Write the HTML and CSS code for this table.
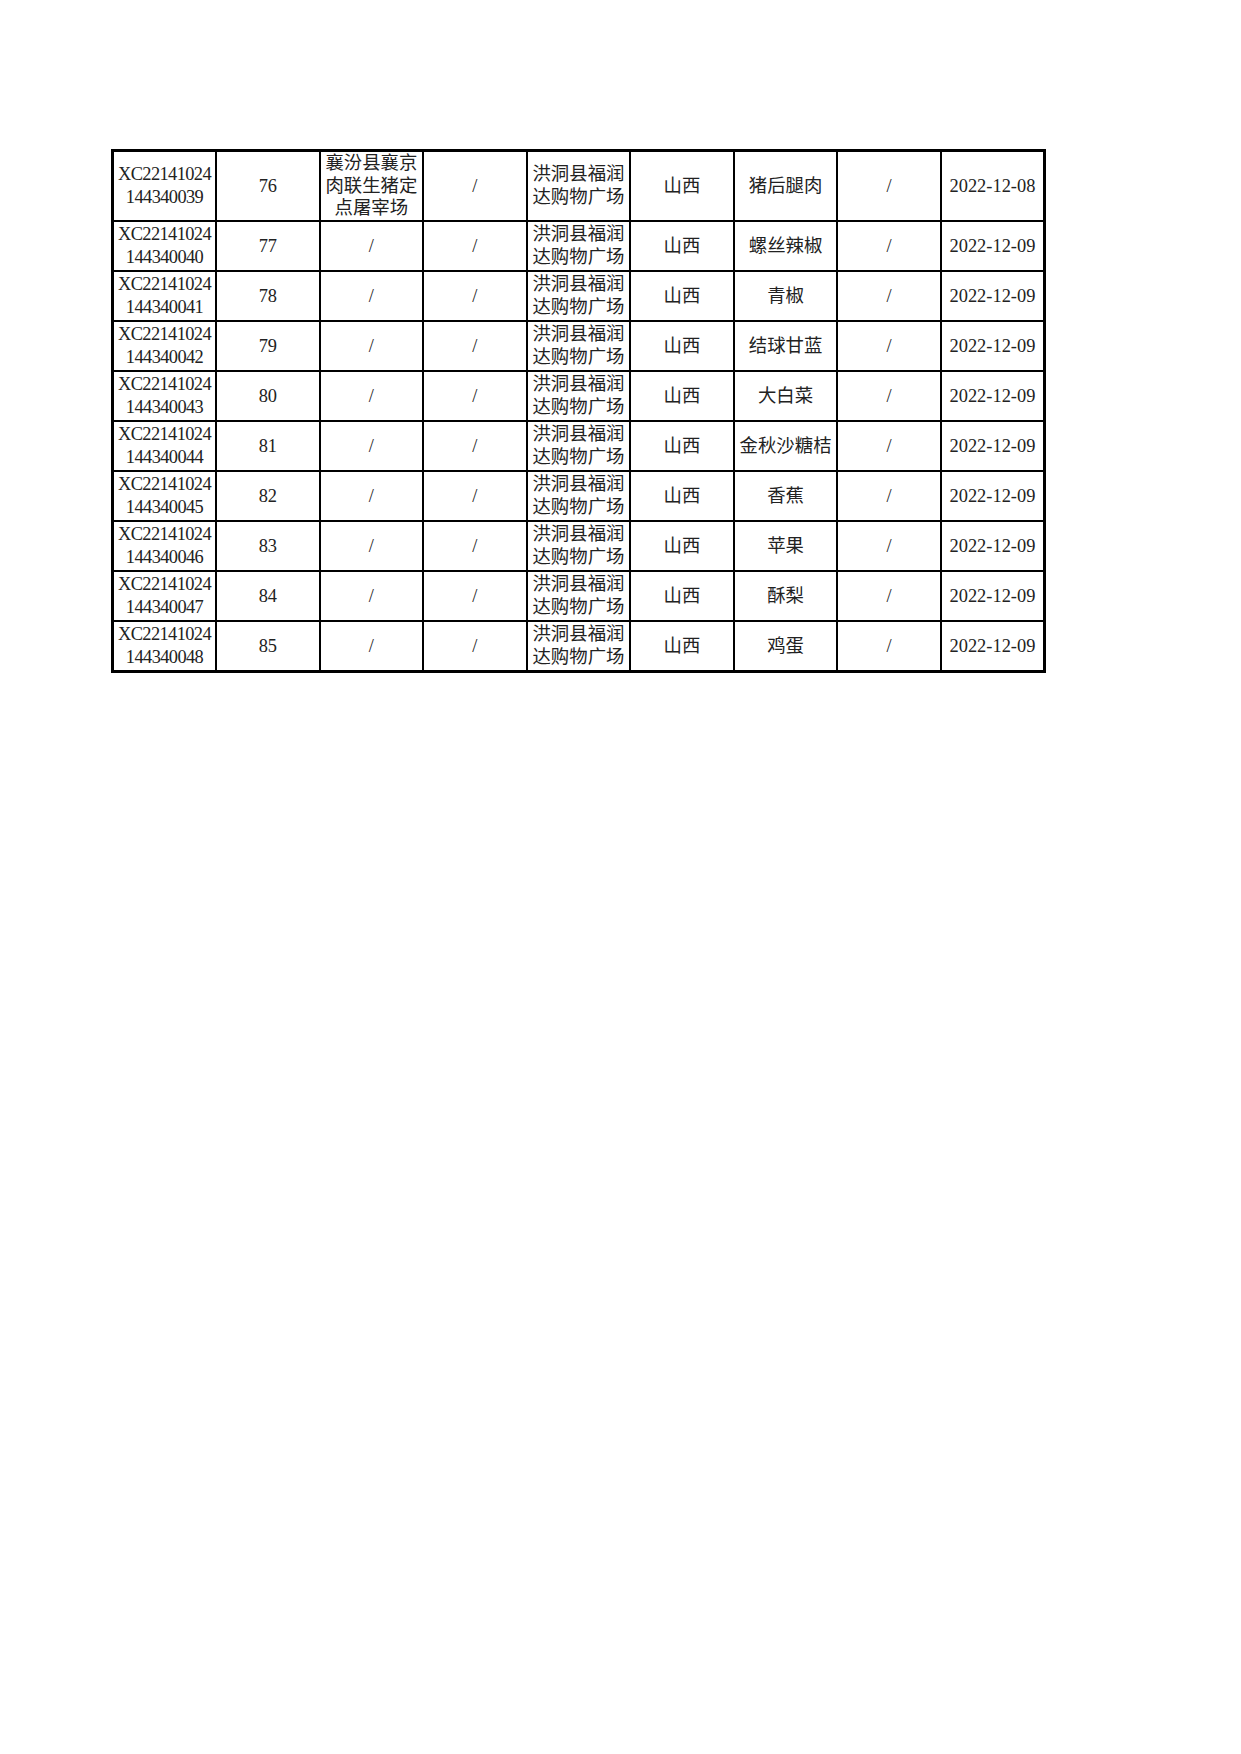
FILE: index.html
```html
<!DOCTYPE html>
<html lang="zh-CN">
<head>
<meta charset="utf-8">
<title>抽检信息</title>
<link rel="stylesheet" href="styles.css">
</head>
<body>
<div class="page">
<table class="sheet">
<tbody>
<tr class="tall"><td class="id">XC22141024<br>144340039</td><td>76</td><td>襄汾县襄京肉联生猪定点屠宰场</td><td>/</td><td>洪洞县福润达购物广场</td><td>山西</td><td>猪后腿肉</td><td>/</td><td>2022-12-08</td></tr>
<tr><td class="id">XC22141024<br>144340040</td><td>77</td><td>/</td><td>/</td><td>洪洞县福润达购物广场</td><td>山西</td><td>螺丝辣椒</td><td>/</td><td>2022-12-09</td></tr>
<tr><td class="id">XC22141024<br>144340041</td><td>78</td><td>/</td><td>/</td><td>洪洞县福润达购物广场</td><td>山西</td><td>青椒</td><td>/</td><td>2022-12-09</td></tr>
<tr><td class="id">XC22141024<br>144340042</td><td>79</td><td>/</td><td>/</td><td>洪洞县福润达购物广场</td><td>山西</td><td>结球甘蓝</td><td>/</td><td>2022-12-09</td></tr>
<tr><td class="id">XC22141024<br>144340043</td><td>80</td><td>/</td><td>/</td><td>洪洞县福润达购物广场</td><td>山西</td><td>大白菜</td><td>/</td><td>2022-12-09</td></tr>
<tr><td class="id">XC22141024<br>144340044</td><td>81</td><td>/</td><td>/</td><td>洪洞县福润达购物广场</td><td>山西</td><td>金秋沙糖桔</td><td>/</td><td>2022-12-09</td></tr>
<tr><td class="id">XC22141024<br>144340045</td><td>82</td><td>/</td><td>/</td><td>洪洞县福润达购物广场</td><td>山西</td><td>香蕉</td><td>/</td><td>2022-12-09</td></tr>
<tr><td class="id">XC22141024<br>144340046</td><td>83</td><td>/</td><td>/</td><td>洪洞县福润达购物广场</td><td>山西</td><td>苹果</td><td>/</td><td>2022-12-09</td></tr>
<tr><td class="id">XC22141024<br>144340047</td><td>84</td><td>/</td><td>/</td><td>洪洞县福润达购物广场</td><td>山西</td><td>酥梨</td><td>/</td><td>2022-12-09</td></tr>
<tr><td class="id">XC22141024<br>144340048</td><td>85</td><td>/</td><td>/</td><td>洪洞县福润达购物广场</td><td>山西</td><td>鸡蛋</td><td>/</td><td>2022-12-09</td></tr>
</tbody>
</table>
</div>
</body>
</html>
```
FILE: styles.css
```css
html, body {
  margin: 0;
  padding: 0;
  background: #ffffff;
}
.page {
  padding: 149px 0 0 111px;
}
.sheet {
  border-collapse: collapse;
  table-layout: fixed;
  width: 935px;
  border: 3px solid #000;
  font-family: "Liberation Serif", "Noto Sans CJK SC", serif;
  font-size: 18.4px;
  line-height: 23px;
  color: #222;
}
.sheet td {
  border: 2px solid #000;
  padding: 0 2px;
  text-align: center;
  vertical-align: middle;
  word-break: break-all;
  height: 48px;
}
.sheet td.id {
  white-space: nowrap;
  letter-spacing: -0.6px;
  padding: 0;
}
.sheet tr.tall td {
  height: 68px;
  line-height: 22.6px;
}
```
